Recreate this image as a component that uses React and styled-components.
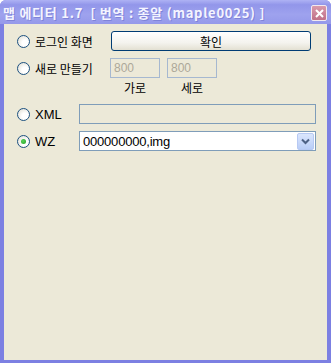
import React from "react";
import styled, { createGlobalStyle } from "styled-components";

const Global = createGlobalStyle`
  html, body { margin: 0; padding: 0; }
  body {
    width: 331px;
    height: 363px;
    overflow: hidden;
    font-family: "Noto Sans CJK KR", "DejaVu Sans", sans-serif;
  }
`;

const Window = styled.div`
  width: 331px;
  height: 363px;
  box-sizing: border-box;
  display: flex;
  flex-direction: column;
  background: #7c80e2;
  border-radius: 6px 6px 0 0;
  overflow: hidden;
`;

const TitleBar = styled.div`
  height: 24px;
  flex: none;
  display: flex;
  align-items: center;
  justify-content: space-between;
  padding: 0 4px 0 3px;
  background: linear-gradient(
    to bottom,
    #aeb2f4 0%,
    #9296ea 20%,
    #9ea2ee 60%,
    #9599ea 100%
  );
`;

const Title = styled.span`
  color: #f4f4ff;
  font-size: 13px;
  font-weight: bold;
  letter-spacing: 0.75px;
  white-space: pre;
  text-shadow: 1px 1px 0 #7f83d8;
`;

const CloseBox = styled.div`
  width: 14px;
  height: 14px;
  border: 1px solid #f2eaf0;
  border-radius: 2px;
  background: linear-gradient(to bottom, #d99aac, #c07088);
  display: flex;
  align-items: center;
  justify-content: center;
  margin-top: 2px;
`;

const Body = styled.div`
  flex: 1;
  margin: 0 4px 3px 4px;
  background: #ece9d8;
  padding: 7px 0 0 13px;
  box-sizing: border-box;
  font-size: 12px;
  color: #000;
`;

const Row = styled.div`
  display: flex;
  align-items: ${(p) => (p.$top3 ? "flex-start" : "center")};
  height: ${(p) => (p.$top3 ? "auto" : "20px")};
  margin-top: ${(p) => p.$top || 0}px;
`;

const Choice = styled.label`
  display: flex;
  align-items: center;
  gap: 5px;
  height: 20px;
  width: ${(p) => p.$w}px;
  flex: none;
  white-space: nowrap;
  font-family: ${(p) =>
    p.$latin ? '"Liberation Sans", Arial, sans-serif' : '"Noto Sans CJK KR", sans-serif'};
  font-size: ${(p) => (p.$latin ? 13 : 12)}px;
`;

const Radio = styled.span`
  width: 11px;
  height: 11px;
  flex: none;
  border-radius: 50%;
  border: 1px solid #1c5180;
  background: radial-gradient(circle at 65% 65%, #ffffff 30%, #dcd9cd 100%);
  display: flex;
  align-items: center;
  justify-content: center;
  &::after {
    content: "";
    width: 5px;
    height: 5px;
    border-radius: 50%;
    background: ${(p) => (p.$on ? "radial-gradient(circle at 40% 40%, #5ad25a, #21a121)" : "transparent")};
  }
`;

const PushButton = styled.button`
  width: 200px;
  height: 20px;
  padding: 0;
  border: 1px solid #003c74;
  border-radius: 3px;
  background: linear-gradient(to bottom, #ffffff 0%, #f4f3ee 60%, #e3e0d2 100%);
  font-family: "Noto Sans CJK KR", sans-serif;
  font-size: 12px;
  color: #000;
`;

const SizeGroup = styled.div`
  display: flex;
  gap: 7px;
`;

const SizeCol = styled.div`
  display: flex;
  flex-direction: column;
  align-items: center;
  gap: 3px;
`;

const SizeBox = styled.div`
  width: 45px;
  height: 18px;
  border: 1px solid #a6b8d0;
  background: #ece9d8;
  color: #aca899;
  font-family: "Liberation Sans", Arial, sans-serif;
  font-size: 12px;
  line-height: 18px;
  padding-left: 3px;
`;

const Caption = styled.span`
  font-size: 12px;
  line-height: 14px;
`;

const Field = styled.div`
  width: 231px;
  height: 18px;
  border: 1px solid #7f9db9;
  background: ${(p) => (p.$white ? "#fff" : "#ece9d8")};
  display: flex;
  align-items: center;
  justify-content: space-between;
  padding: 0 1px 0 3px;
  font-family: "Liberation Sans", Arial, sans-serif;
  font-size: 13px;
  letter-spacing: -0.2px;
`;

const DropButton = styled.div`
  width: 15px;
  height: 15px;
  border-radius: 2px;
  border: 1px solid #b7c9f3;
  background: linear-gradient(to bottom, #dbe6fd, #b9cdf7);
  display: flex;
  align-items: center;
  justify-content: center;
`;

export default function App() {
  return (
    <Window>
      <Global />
      <TitleBar>
        <Title>맵 에디터 1.7  [ 번역 : 종알 (maple0025) ]</Title>
        <CloseBox>
          <svg width="9" height="9" viewBox="0 0 9 9">
            <path d="M1 1 L8 8 M8 1 L1 8" stroke="#fff" strokeWidth="2" />
          </svg>
        </CloseBox>
      </TitleBar>
      <Body>
        <Row>
          <Choice $w={94}>
            <Radio />
            로그인 화면
          </Choice>
          <PushButton>확인</PushButton>
        </Row>
        <Row $top={7} $top3>
          <Choice $w={93}>
            <Radio />
            새로 만들기
          </Choice>
          <SizeGroup>
            <SizeCol>
              <SizeBox>800</SizeBox>
              <Caption>가로</Caption>
            </SizeCol>
            <SizeCol>
              <SizeBox>800</SizeBox>
              <Caption>세로</Caption>
            </SizeCol>
          </SizeGroup>
        </Row>
        <Row $top={9}>
          <Choice $w={62} $latin>
            <Radio />
            XML
          </Choice>
          <Field />
        </Row>
        <Row $top={7}>
          <Choice $w={62} $latin>
            <Radio $on />
            WZ
          </Choice>
          <Field $white>
            <span>000000000,img</span>
            <DropButton>
              <svg width="9" height="7" viewBox="0 0 9 7">
                <path d="M1 1.5 L4.5 5 L8 1.5" stroke="#4d6185" strokeWidth="2" fill="none" />
              </svg>
            </DropButton>
          </Field>
        </Row>
      </Body>
    </Window>
  );
}
